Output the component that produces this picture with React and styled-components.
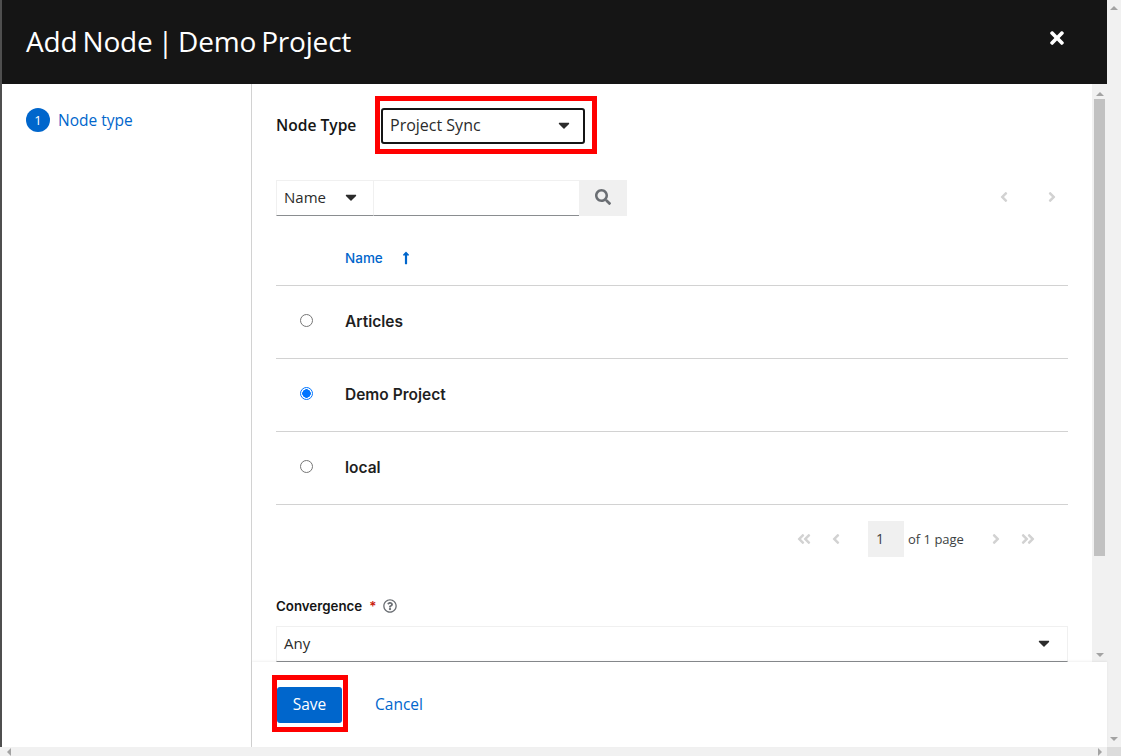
import React from "react";
import styled, { createGlobalStyle } from "styled-components";
import {
  FaTimes,
  FaSearch,
  FaCaretDown,
  FaAngleLeft,
  FaAngleRight,
  FaAngleDoubleLeft,
  FaAngleDoubleRight,
  FaLongArrowAltUp,
  FaRegQuestionCircle,
} from "react-icons/fa";

const Global = createGlobalStyle`
  html, body { margin: 0; padding: 0; background: #fff; }
  * { box-sizing: border-box; }
  body { font-family: "Open Sans", "Noto Sans", sans-serif; color: #151515; }
`;

const Page = styled.div`
  width: 1121px;
  height: 756px;
  display: flex;
  flex-direction: column;
  overflow: hidden;
`;

const Top = styled.div`
  flex: 1;
  min-height: 0;
  display: flex;
`;

const Strip = styled.div`
  width: 2px;
  background: #4f4f4f;
`;

const Modal = styled.div`
  flex: 1;
  min-width: 0;
  display: flex;
  flex-direction: column;
`;

const Header = styled.header`
  height: 84px;
  flex: none;
  background: #151515;
  color: #fff;
  display: flex;
  align-items: center;
  justify-content: space-between;
  padding: 0 40px 2px 24px;
`;

const Title = styled.h1`
  margin: 0;
  font-size: 28px;
  font-weight: 400;
  letter-spacing: -0.2px;
  word-spacing: -1.9px;
`;

const Close = styled.button`
  border: 0;
  background: none;
  padding: 0;
  color: #fff;
  font-size: 20px;
  display: flex;
  margin: -6px 0 0;
`;

const Body = styled.div`
  flex: 1;
  min-height: 0;
  display: flex;
`;

const Side = styled.nav`
  width: 250px;
  flex: none;
  border-right: 1px solid #d2d2d2;
  padding: 24px 24px;
`;

const Step = styled.a`
  display: flex;
  align-items: center;
  gap: 8px;
  color: #06c;
  font-size: 15.5px;
  line-height: 22px;
  height: 24px;
`;

const StepNum = styled.span`
  width: 24px;
  height: 24px;
  border-radius: 50%;
  background: #06c;
  color: #fff;
  font-size: 13px;
  display: flex;
  align-items: center;
  justify-content: center;
`;

const Main = styled.main`
  flex: 1;
  min-width: 0;
  display: flex;
  flex-direction: column;
`;

const Scroller = styled.div`
  height: 578px;
  flex: none;
  display: flex;
`;

const Content = styled.div`
  flex: 1;
  min-width: 0;
  overflow: hidden;
  padding: 12px 24px 0 24px;
`;

const TypeRow = styled.div`
  display: flex;
  align-items: center;
  height: 58px;
`;

const TypeLabel = styled.label`
  font-size: 15.6px;
  font-weight: 600;
  width: 99px;
  padding-bottom: 1px;
`;

const Mark = styled.div`
  border: 5px solid #f00;
  background: #fff;
  padding: ${(p) => p.$pad};
  display: flex;
`;

const TypeSelect = styled.div`
  width: 204px;
  height: 36px;
  border: 2px solid #151515;
  border-radius: 3px;
  display: flex;
  align-items: center;
  justify-content: space-between;
  padding: 0 10px 2px 7px;
  font-size: 16px;
  color: #2b2b2b;
`;

const Toolbar = styled.div`
  margin-top: 26px;
  display: flex;
  align-items: center;
  height: 36px;
`;

const FilterPick = styled.div`
  width: 98px;
  height: 36px;
  border: 1px solid #f0f0f0;
  border-bottom: 1px solid #8a8d90;
  display: flex;
  align-items: center;
  justify-content: space-between;
  padding: 0 13px 2px 7px;
  font-size: 15px;
  color: #2b2b2b;
`;

const FilterInput = styled.div`
  width: 205px;
  height: 36px;
  border-top: 1px solid #f0f0f0;
  border-bottom: 1px solid #8a8d90;
`;

const SearchBtn = styled.div`
  width: 48px;
  height: 36px;
  background: #f0f0f0;
  color: #6a6e73;
  font-size: 16px;
  display: flex;
  align-items: center;
  justify-content: center;
  padding-bottom: 2px;
`;

const Arrows = styled.div`
  margin-left: auto;
  display: flex;
  gap: 32px;
  padding: 0 8px 2px 0;
  color: #d2d2d2;
  font-size: 16px;
`;

const HeadRow = styled.div`
  height: 70px;
  display: flex;
  align-items: center;
  border-bottom: 1px solid #d2d2d2;
  padding: 16px 0 1px 69px;
  color: #06c;
  font-size: 13.5px;
  font-weight: 500;
  font-family: Inter, sans-serif;
  gap: 16px;
`;

const Row = styled.div`
  height: 73px;
  display: flex;
  align-items: center;
  border-bottom: 1px solid #d2d2d2;
  padding: 0 0 2px 24px;
  font-family: Inter, sans-serif;
  font-size: 15.5px;
  font-weight: 600;
  color: #1f1f1f;
`;

const Radio = styled.span`
  width: 13px;
  height: 13px;
  border-radius: 50%;
  margin-right: 32px;
  flex: none;
  margin-top: -2px;
  border: 1px solid ${(p) => (p.$on ? "#0075ff" : "#767676")};
  background: ${(p) => (p.$on ? "radial-gradient(circle, #0075ff 0 4px, #fff 4.5px)" : "#fff")};
`;

const Pager = styled.div`
  display: flex;
  align-items: center;
  justify-content: flex-end;
  height: 36px;
  margin-top: 16px;
  padding-right: 24px;
  color: #d2d2d2;
  font-size: 16px;
`;

const PageIcon = styled.span`
  width: 32px;
  display: flex;
  justify-content: center;
`;

const PageBox = styled.span`
  width: 36px;
  height: 36px;
  margin-left: 16px;
  background: #f0f0f0;
  color: #3c3f42;
  font-size: 14px;
  display: flex;
  align-items: center;
  padding: 0 0 1px 8px;
`;

const PageOf = styled.span`
  width: 56px;
  white-space: nowrap;
  color: #3c3f42;
  font-size: 13px;
  margin: 0 16px 0 4px;
`;

const FieldLabel = styled.div`
  margin-top: 39px;
  display: flex;
  align-items: center;
  font-size: 13.3px;
  font-weight: 600;
  font-family: Inter, sans-serif;
  height: 20px;
`;

const Req = styled.span`
  color: #c9190b;
  margin: 0 7px;
`;

const Help = styled.span`
  color: #6a6e73;
  font-size: 14px;
  display: flex;
`;

const WideSelect = styled.div`
  margin-top: 10px;
  height: 36px;
  border: 1px solid #f0f0f0;
  border-bottom: 1px solid #8a8d90;
  display: flex;
  align-items: center;
  justify-content: space-between;
  padding: 0 14px 2px 7px;
  font-size: 15px;
  color: #2b2b2b;
`;

const VBar = styled.div`
  width: ${(p) => p.$w}px;
  flex: none;
  background: #f1f1f1;
  display: flex;
  flex-direction: column;
  align-items: center;
  justify-content: space-between;
  padding: ${(p) => p.$pad};
`;

const Thumb = styled.div`
  width: 11px;
  height: 457px;
  background: #c1c1c1;
  margin-top: 3px;
  margin-bottom: auto;
`;

const Tri = styled.span`
  width: 0;
  height: 0;
  border-left: 4px solid transparent;
  border-right: 4px solid transparent;
  border-${(p) => (p.$up ? "bottom" : "top")}: 4px solid #a3a3a3;
`;

const SideTri = styled.span`
  width: 0;
  height: 0;
  border-top: 4px solid transparent;
  border-bottom: 4px solid transparent;
  border-${(p) => (p.$left ? "right" : "left")}: 4px solid #a3a3a3;
`;

const Footer = styled.footer`
  flex: 1;
  display: flex;
  align-items: flex-start;
  gap: 24px;
  padding: 13px 0 0 20px;
  box-shadow: 0 -1px 2px rgba(0, 0, 0, 0.06);
  position: relative;
`;

const Save = styled.button`
  width: 65px;
  height: 36px;
  border: 0;
  border-radius: 3px;
  background: #06c;
  color: #fff;
  font: 15.5px "Open Sans", sans-serif;
  padding: 0 0 3px;
`;

const Cancel = styled.a`
  color: #06c;
  font-size: 15.5px;
  margin: 18px 0 0 3px;
`;

const HBar = styled.div`
  height: 9px;
  flex: none;
  background: #f1f1f1;
  display: flex;
  align-items: center;
  justify-content: space-between;
  padding-left: 7px;
`;

const HEnd = styled.div`
  display: flex;
  align-items: center;
  gap: 5px;
`;

const Corner = styled.div`
  width: 14px;
  height: 9px;
  background: #dcdcdc;
`;

const rows = [
  { name: "Articles" },
  { name: "Demo Project", on: true },
  { name: "local" },
];

export default function App() {
  return (
    <Page>
      <Global />
      <Top>
        <Strip />
        <Modal>
          <Header>
            <Title>Add Node | Demo Project</Title>
            <Close aria-label="Close">
              <FaTimes />
            </Close>
          </Header>
          <Body>
            <Side>
              <Step>
                <StepNum>1</StepNum>
                Node type
              </Step>
            </Side>
            <Main>
              <Scroller>
                <Content>
                  <TypeRow>
                    <TypeLabel>Node Type</TypeLabel>
                    <Mark $pad="7px 7px 5px 1px">
                      <TypeSelect>
                        Project Sync
                        <FaCaretDown size={18} />
                      </TypeSelect>
                    </Mark>
                  </TypeRow>
                  <Toolbar>
                    <FilterPick>
                      Name
                      <FaCaretDown size={18} />
                    </FilterPick>
                    <FilterInput />
                    <SearchBtn>
                      <FaSearch />
                    </SearchBtn>
                    <Arrows>
                      <FaAngleLeft />
                      <FaAngleRight />
                    </Arrows>
                  </Toolbar>
                  <HeadRow>
                    Name
                    <FaLongArrowAltUp size={14} />
                  </HeadRow>
                  {rows.map((r) => (
                    <Row key={r.name}>
                      <Radio $on={r.on} />
                      {r.name}
                    </Row>
                  ))}
                  <Pager>
                    <PageIcon>
                      <FaAngleDoubleLeft />
                    </PageIcon>
                    <PageIcon>
                      <FaAngleLeft />
                    </PageIcon>
                    <PageBox>1</PageBox>
                    <PageOf>of 1 page</PageOf>
                    <PageIcon>
                      <FaAngleRight />
                    </PageIcon>
                    <PageIcon>
                      <FaAngleDoubleRight />
                    </PageIcon>
                  </Pager>
                  <FieldLabel>
                    Convergence
                    <Req>*</Req>
                    <Help>
                      <FaRegQuestionCircle />
                    </Help>
                  </FieldLabel>
                  <WideSelect>
                    Any
                    <FaCaretDown size={18} />
                  </WideSelect>
                </Content>
                <VBar $w={15} $pad="8px 0 5px">
                  <Tri $up />
                  <Thumb />
                  <Tri />
                </VBar>
              </Scroller>
              <Footer>
                <Mark $pad="7px 1px 4px 0">
                  <Save>Save</Save>
                </Mark>
                <Cancel>Cancel</Cancel>
              </Footer>
            </Main>
          </Body>
        </Modal>
        <VBar $w={14} $pad="6px 0">
          <Tri $up />
          <Tri />
        </VBar>
      </Top>
      <HBar>
        <SideTri $left />
        <HEnd>
          <SideTri />
          <Corner />
        </HEnd>
      </HBar>
    </Page>
  );
}
